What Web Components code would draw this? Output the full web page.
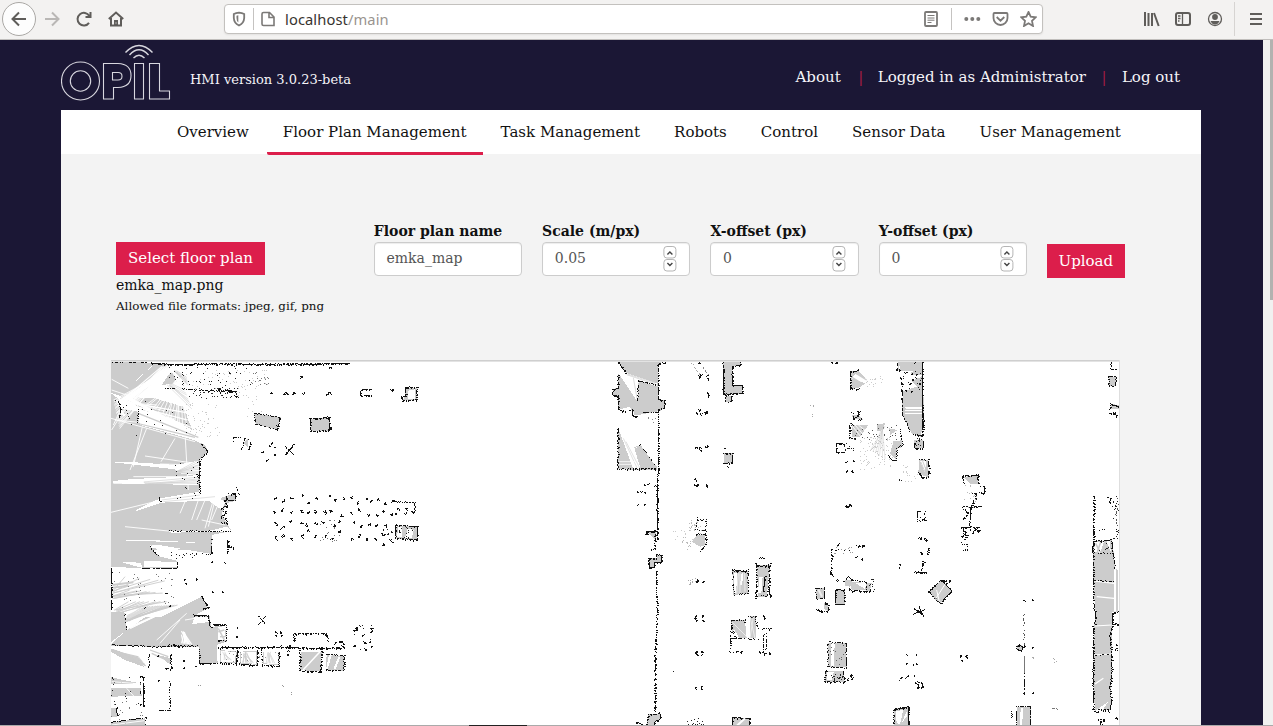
<!DOCTYPE html>
<html lang="en"><head><meta charset="utf-8"><title>OPIL HMI</title>
<style>
html,body{margin:0;height:100%;overflow:hidden;background:#1b1735;font-family:"DejaVu Serif",serif}
</style></head><body>
<hmi-window></hmi-window>
<script>
function define(name, html, setup){
  const t=document.createElement('template');t.innerHTML=html;
  customElements.define(name,class extends HTMLElement{
    constructor(){super();this.attachShadow({mode:'open'}).append(t.content.cloneNode(true));}
    connectedCallback(){if(setup&&!this.ready){this.ready=true;setup(this,this.shadowRoot);}}
  });
}

define('browser-bar',`<style>
:host{display:flex;box-sizing:border-box;height:40px;background:#f3f2f1;border-bottom:1px solid #c0bebc;align-items:center;padding:0 0 1px 2px;font-family:"Noto Sans","Open Sans",sans-serif}
svg{display:block;flex:none;fill:none;stroke:#5f5d5a;stroke-width:2}
.back{width:32px;height:32px;border:1px solid #aaa8a5;border-radius:50%;background:#fdfdfd;display:grid;place-items:center}
.fwd{margin-left:8px}.re{margin-left:16px}.home{margin-left:16px}
.url{box-sizing:border-box;display:flex;align-items:center;width:819px;height:30px;margin-left:100px;border:1px solid #c3c1be;border-radius:4px;background:#fff;box-shadow:0 1px 2px #0001;padding-left:6px}
.url svg{stroke:#7b7977;stroke-width:1.8}
.sep{width:1px;height:22px;background:#c5c3c1}
.addr{font-size:14.7px;line-height:20px;color:#99948f;margin-left:9px;flex:1;letter-spacing:.1px}.addr b{font-weight:400;color:#37342f}
</style>
<div class="back"><svg width="16" height="16"><path d="M15 8H2M8 1.5 1.5 8 8 14.5"/></svg></div>
<svg class="fwd" width="16" height="16" style="stroke:#b9b7b5"><path d="M1 8H14M8 1.5 14.5 8 8 14.5"/></svg>
<svg class="re" width="16" height="16"><path d="M13.3 5A6.3 6.3 0 1 0 13 11.8M14.5 1V6H9.5" /></svg>
<svg class="home" width="16" height="16"><path d="M.8 8 8 1.5 15.2 8M3 7V14.5H13V7"/><path d="M8 14.5V9" stroke-width="4"/><path d="M8 11.5v1" stroke="#fff" stroke-width="1"/></svg>
<div class="url"><svg width="16" height="16"><path d="M8 1.7Q11 2 13.200 3V7Q13 12 8 14.5Q3 12 2.800 7V3Q5 2 8 1.700Z"/><path d="M7.300 4.300V11.500Q5.500 10 5.500 7V4.700Z" stroke="none" fill="#7b7977"/></svg>
<span class="sep" style="margin:0 6px"></span><svg width="16" height="16"><path d="M3.500 1.500H9.500L14 6V14.500H3.500Q2 14.500 2 13V3Q2 1.500 3.500 1.500ZM9 1.500V6.500H14" stroke-width="1.600"/></svg>
<span class="addr"><b>localhost</b>/main</span>
<svg width="16" height="16"><rect x="2" y="1" width="12" height="14" rx="1"/><path d="M4.5 4.5H11.5M4.5 7H11.5M4.5 9.2H11.5M4.5 11.5H8.5" stroke-width="1"/></svg>
<span class="sep" style="margin:0 12px"></span>
<svg width="17" height="16"><g fill="#7b7977" stroke="none"><circle cx="2.3" cy="8" r="2"/><circle cx="8.3" cy="8" r="2"/><circle cx="14.3" cy="8" r="2"/></g></svg>
<svg style="margin-left:11px" width="17" height="16"><path d="M2.500 2H14.500Q15.500 2 15.500 3V7A7 7 0 0 1 1.500 7V3Q1.500 2 2.500 2ZM4.700 6 8.500 9.700 12.300 6"/></svg>
<svg style="margin:0 5px 0 11px" width="17" height="16"><path d="M8.500 1 10.700 5.700 15.700 6.300 12 9.800 13 15 8.500 12.300 4 15 5 9.800 1.300 6.300 6.300 5.700Z"/></svg></div>
<svg style="margin-left:100px" width="17" height="16"><path d="M2 1V15M5.500 2V15M9 2V15M11 2 15.700 15"/></svg>
<svg style="margin-left:14px" width="18" height="16"><rect x="2" y="2" width="14" height="12" rx="2"/><path d="M8.500 2V14M4 5H6.500M4 7.500H6.500M4 10H5.500" stroke-width="1.300"/></svg>
<svg style="margin-left:15px" width="17" height="16"><circle cx="8" cy="8" r="6.500" stroke-width="1.300"/><circle cx="8" cy="6" r="2.900" fill="#5f5d5a" stroke="none"/><path d="M3.500 10H12.500Q11 13.500 8 13.500T3.500 10Z" fill="#5f5d5a" stroke="none"/></svg>
<span class="sep" style="height:34px;margin-left:10px;background:#d6d4d2"></span>
<svg style="margin-left:15px" width="12" height="16"><path d="M0 3H12M0 8H12M0 13H12"/></svg>`);

define('opil-logo',`<style>:host{display:block;width:110px;height:56px}svg{display:block;fill:none;stroke:#d8d7df;stroke-width:1.100}</style>
<svg width="110" height="58" viewBox="61 44 110 58"><circle cx="80.500" cy="81" r="19"/><circle cx="80.500" cy="81" r="10.200"/>
<path d="M103.500 63.500H118Q131 64 131 75.500T118 87.500H113.500V99H103.500ZM112.500 72.500V80H118Q122 80 122 76.200T118 72.500ZM134.500 63.500H143.500V99H134.500ZM149.500 63.500H159.500V91H169.500V99H149.500Z"/>
<path d="M125.500 52.500Q139 38.500 152.500 52.500M129.500 55Q139 44.500 148.500 55M133.500 58Q139 52.500 144.500 58" stroke-width="1.400"/></svg>`);

define('site-header',`<style>
:host{display:flex;height:70px;box-sizing:border-box;color:#f5f4f8;padding-top:4px;width:1140px;margin-left:61px}
.v{font-size:13px;line-height:20px;margin:26px 0 0 19px;flex:1}
nav{display:flex;font-size:15px;line-height:20px;margin:23px 21px 0 0}
i{font-style:normal;color:#a51d45;width:37.200px;text-align:center;text-indent:3px}i+span+i{text-indent:0;width:36px}
</style><opil-logo></opil-logo><span class="v">HMI version 3.0.23-beta</span>
<nav><span>About</span><i>|</i><span>Logged in as Administrator</span><i>|</i><span>Log out</span></nav>`);

define('nav-tab',`<style>:host{display:block;box-sizing:border-box;height:45px;padding:1px 16px 0;font-size:15px;line-height:43px;color:#111;white-space:nowrap}
:host([active]){border-bottom:3px solid #dc1e4b;border-radius:2px 0 0 2px}</style><slot></slot>`);
define('nav-tabs',`<style>:host{display:flex;gap:2.050px;height:44px;background:#fff;padding-left:100px}</style><slot></slot>`);

define('action-button',`<style>:host{display:block;box-sizing:border-box;background:#dc1e4b;color:#fff;font-size:15px;line-height:33px;padding:0 12px;white-space:nowrap;width:max-content}</style><slot></slot>`);

define('form-field',`<style>:host{display:block;width:148.300px}
label{display:block;font-weight:700;font-size:14px;line-height:20px;color:#111;height:21px;white-space:nowrap}
.in{box-sizing:border-box;display:flex;justify-content:space-between;height:34px;border:1px solid #ccc;border-radius:4px;background:#fff;box-shadow:inset 0 1px 1px #00000013;padding:0 12px 0 11.700px;color:#555;font-size:14px;line-height:31px}
svg{display:none;margin-top:3px;fill:none;stroke:#b5b5b5}:host([number]) svg{display:block}
</style><label></label><div class="in"><slot></slot><svg width="14" height="26"><rect x=".9" y=".5" width="12" height="11.500" rx="3"/><rect x=".9" y="13.500" width="12" height="11.500" rx="3"/><path d="M4.400 8.500 6.900 6 9.400 8.500M4.400 17 6.900 19.500 9.400 17" stroke="#444" stroke-width="1.400"/></svg></div>`,
(h,r)=>r.querySelector('label').textContent=h.getAttribute('label'));

define('floor-form',`<style>
:host{display:flex;height:206px;box-sizing:border-box;padding:67px 0 0 55px}
.file{width:257.800px;padding-top:21px;color:#111}.file action-button{line-height:33px}
.name{font-size:14px;line-height:20px}.hint{font-size:11.900px;line-height:20px;margin-top:1px}
.fields{display:flex;gap:20px}.up{padding:23px 0 0 20px}.up action-button{line-height:34px;padding:0 11.500px}
</style>
<div class="file"><action-button>Select floor plan</action-button><div class="name">emka_map.png</div><div class="hint">Allowed file formats: jpeg, gif, png</div></div>
<div class="fields"><form-field label="Floor plan name">emka_map</form-field><form-field label="Scale (m/px)" number>0.05</form-field><form-field label="X-offset (px)" number>0</form-field><form-field label="Y-offset (px)" number>0</form-field></div>
<div class="up"><action-button>Upload</action-button></div>`);

define('floor-map',`<style>:host{display:block;margin-left:50px;width:1009px;height:366px;background:#fff}svg{display:block}</style>
<svg width="1009" height="366" viewBox="111 360 1009 366" shape-rendering="crispEdges"></svg>`,(h,r)=>{
 let seed=71,ox=0,oy=0,out='';
 const rnd=()=>(seed=(seed*16807)%2147483647)/2147483647;
 const pts=s=>s.trim().split(/\s+/).map(p=>{const[a,b]=p.split(',').map(Number);return[ox+a/3,oy+b/3]});
 const put=(d,c)=>out+='<path fill="'+c+'" d="'+d+'"/>';
 const px=(x,y,w=1,t=1)=>'M'+Math.floor(x)+' '+Math.floor(y)+'h'+w+'v'+t+'h-'+w+'z';
 const poly=(s,c)=>put('M'+pts(s).map(p=>p.join(' ')).join('L')+'Z',c);
 const at=(x,y)=>{ox=x;oy=y};
 const G=(...a)=>a.forEach(s=>poly(s,'#cccccc'));
 const W=(...a)=>a.forEach(s=>poly(s,'#fff'));
 // broken wall following a polyline; dense walls thicken here and there
 const L=(s,den=.82,j=.9,c='#111')=>{const p=pts(s);j*=.7;let d='';for(let i=1;i<p.length;i++){const[x1,y1]=p[i-1],[x2,y2]=p[i],n=Math.max(1,Math.hypot(x2-x1,y2-y1)),v=Math.abs(y2-y1)>Math.abs(x2-x1);
  for(let k=0;k<n;k++)if(rnd()<den){const t=den>.8&&j>.4&&rnd()<.3?2:1;d+=px(x1+(x2-x1)*k/n+(rnd()-.5)*j,y1+(y2-y1)*k/n+(rnd()-.5)*j,v?t:1,v?1:t)}}put(d,c)};
 const R=(s,c='#fff',w=.9)=>{const p=pts(s);for(let i=0;i+1<p.length;i+=2)out+='<path fill="none" shape-rendering="auto" stroke="'+c+'" stroke-width="'+w+'" d="M'+p[i].join(' ')+'L'+p[i+1].join(' ')+'"/>'};
 const fan=(x,y,x1,y1,x2,y2,n,c,w,q=12)=>{for(let i=0;i<n;i++){const t=(i+rnd()*.7)/n;R((x+rnd()*q)+','+(y+rnd()*q)+' '+(x1+(x2-x1)*t)+','+(y1+(y2-y1)*t),c,w)}};
 const S=(x,y,w,t,n,c='#222')=>{let d='';while(n-->0)d+=px(ox+(x+rnd()*w)/3,oy+(y+rnd()*t)/3);put(d,c)};
 // compact mark: a short random walk of pixels round each point
 const B=(s,n=5,r=2)=>{let d='';pts(s).forEach(([x,y])=>{let a=x,b=y;for(let k=0;k<n+1;k++){d+=px(a,b);a+=Math.round((rnd()-.5)*2.600);b+=Math.round((rnd()-.5)*2.600);if(Math.abs(a-x)>r)a=x;if(Math.abs(b-y)>r)b=y}});put(d,'#111')};
 const box=(s,den=.8)=>{G(s);L(s+' '+s.trim().split(/\s+/)[0],den)};

 // north-west hall
 at(105,350);
 G('18,32 150,40 105,80 50,140 18,128','170,105 200,60 225,85 215,100','18,130 45,150 45,190 18,215',
   '18,150 50,195 130,225 270,272 298,283 310,305 285,330 283,430 330,450 390,430 392,452 365,460 350,490 365,520 380,543 320,555 320,600 18,600');
 W('45,140 150,140 240,170 285,280 270,270 105,225 100,185 45,165','25,337 60,335 215,345 280,332 283,380 215,368 210,358','25,393 85,387 280,378 280,405 130,402 25,400','165,445 285,425 350,437 345,450 170,458 95,483 92,480','190,543 310,543 365,530 380,545 200,548','320,570 368,570 368,600 320,600','18,570 130,577 320,592 320,600 160,596 18,575','330,440 300,450 315,455 350,480 362,455');
 G('148,42 205,42 190,60 70,165 45,150 50,135','60,140 150,145 235,170 262,240 200,205 110,180','48,175 98,185 102,222 70,212');
 fan(165,42,45,150,75,165,15,'#fff',1.100,30);fan(180,42,25,150,45,240,18,'#fff',.8,20);fan(205,50,70,140,35,170,14);fan(62,138,150,190,265,245,18,'#fff',1.100,8);fan(215,70,120,160,250,240,14,'#fff',.9,20);fan(30,150,150,160,285,265,10);fan(190,40,235,120,300,250,10);
 R('45,152 255,190 50,158 265,215 100,172 280,240','#fff',1.200);
 G('290,284 308,305 285,328 252,325 250,300');
 R('20,88 70,115 18,205 270,275 30,210 130,220 125,235 75,360 112,230 85,350 210,265 168,335 240,250 250,420 120,318 270,340 165,342 280,345 85,380 280,380 25,400 200,400 18,487 170,450 240,455 225,490 280,450 260,510 300,450 275,510 330,450 310,530 325,450 300,535 345,450 320,510 290,510 360,525 190,543 60,530 20,120 95,145 110,210 280,272 70,160 20,240 55,160 25,225');
 R('105,222 270,262 100,190 280,262','#ccc',1.200);
 fan(210,360,280,330,283,378,9,'#ccc',.6);fan(110,395,280,380,280,402,5,'#ccc',.6);R('170,450 285,435 175,455 330,440','#ccc',.6);
 fan(185,98,240,120,262,180,8,'#ccc',.5);fan(205,60,245,80,250,110,6,'#ccc',.7);
 L('22,36 130,37',.6);L('140,40 220,44 330,41 450,43 590,42 735,40',.97,1.200);L('145,43 240,45 400,42 520,45 730,42',.55,2);
 S(190,45,250,60,50);S(220,60,280,60,55,'#ccc');S(250,115,150,30,35,'#333');L('180,115 245,118 310,122 395,124',.75,1.300);S(350,105,50,45,18);S(240,160,110,100,50,'#ccc');
 S(440,60,55,45,18,'#777');S(400,100,70,100,18,'#ccc');B('500,128 540,127 546,131 592,130 565,134 592,80 672,127 670,132 678,52 863,117 350,125 372,128 380,120 395,140 345,118',6);
 L('770,142 765,125 775,118 800,118',.95);L('778,135 800,138',1);
 G('905,115 935,115 935,150 895,150');W('908,122 930,118 930,146 908,148');L('902,112 936,112 936,150 892,152 890,140 903,140 902,112',.95,1.200);
 box('448,190 527,202 518,240 452,222',.75);box('615,206 673,203 675,242 618,244',.85);B('522,208 517,230 667,205 672,236',6);
 L('385,275 388,262 410,262',.6);L('410,298 420,265 430,268',.8);L('432,298 436,275',.9);G('415,280 428,268 428,292');
 L('540,290 565,313',1);L('565,285 542,313',1);B('475,303 492,290 507,293 502,280 511,312 490,328',3);
 L('40,150 48,182 42,205',.9);L('100,180 98,220',.7);L('290,282 309,305 286,328',.88);L('283,330 285,430',.98,.8);L('280,378 278,402',.6);S(25,150,230,110,24);S(210,330,70,120,20);L('165,443 165,458',.9);
 L('395,412 402,435',.8);L('365,440 365,452 391,452 391,432 370,432',.9);L('358,455 368,468 350,475 362,490 350,500 367,510 365,522 350,515',1,2.200);L('190,543 378,544',.75);L('320,570 320,600',.95);L('368,570 368,600',1);S(320,570,65,30,14);L('70,570 70,590',.6);
 B('515,442 532,455 560,446 592,440 610,458 635,442 672,440 690,455 715,449 743,444 760,459 785,446 795,456 817,452 838,463 862,450 511,487 532,480 558,490 590,482 608,486 632,488 662,486 678,480 708,494 742,492 762,482 787,494 815,496 835,487 862,490 511,521 532,531 557,515 588,519 605,523 630,518 655,520 685,528 704,517 748,520 767,531 790,522 817,526 838,527 511,564 532,557 557,566 588,558 608,545 630,562 662,560 681,566 704,548 739,564 762,558 788,568 815,572 833,556 858,574 838,585',7,2.100);
 L('862,455 930,458 930,490',.7);B('875,490 902,492 925,490 878,475 902,475',5);
 G('875,528 936,530 936,570 872,565');W('880,532 892,532 890,560 876,560','908,535 926,540 920,565 900,565');L('872,526 938,530 938,570 872,565 872,526',1,1.300);S(880,530,50,35,16);S(835,520,40,35,13);S(645,510,60,65,20,'#777');

 // south-west hall
 at(105,540);
 G('18,0 320,0 322,42 155,14 135,18 145,32 165,50 216,62 216,85 110,85 18,80','18,215 58,215 66,270 18,306','18,312 66,270 120,232 165,232 290,170 310,205 270,226 314,228 318,262 360,253 365,305 335,315 338,370 283,370 283,322 18,318');
 W('18,0 140,0 315,10 200,6','48,66 108,68 112,84','118,64 216,65 216,82 118,82','135,16 320,44 280,54 160,30','322,0 365,0 365,35 322,35','338,262 360,258 362,300 340,302','268,232 312,230 314,246 262,252');
 fan(18,150,60,110,200,125,5,'#ccc');fan(18,165,70,150,180,160,7,'#ccc');fan(22,210,70,185,190,185,8,'#ccc');fan(62,235,120,200,220,195,14,'#ccc');fan(60,225,110,200,170,200,10,'#ddd');
 R('22,135 85,127 22,143 70,137','#ccc',2);fan(70,255,150,230,210,200,6);R('165,310 225,240 155,300 245,220 240,240 300,230');fan(228,272,228,310,262,314,8,undefined,1.200);R('340,275 358,270 345,290 360,290 340,265 358,300','#ccc',1.500);
 L('20,85 20,212',.85);L('110,85 216,85 218,63',.7);L('320,10 320,42 300,45',.85);L('135,20 165,52',.7);S(190,35,110,20,16);L('368,0 368,45',1);L('366,20 388,24',1);
 L('290,170 310,203 295,205',1);L('265,225 310,228 315,258 320,265',.95);L('325,253 365,255 364,305 340,300',.9);L('58,215 66,270',.5);S(20,95,200,110,36,'#777');B('237,117 273,118 245,133 322,157 354,158 183,160 194,200 122,202 358,68 323,67 398,261 398,289',3,1);
 L('22,315 160,320 280,318',.75,1.800);L('190,317 210,315 235,320',1,2);L('340,323 470,322 560,323 650,325 720,324',.95,1.500);L('350,322 460,325 540,320 640,328',.4,3);
 G('345,330 395,335 394,370 345,367','405,335 457,332 456,374 405,372','475,335 522,335 520,376 475,372');W('348,333 392,336 391,367 348,365','408,337 454,336 453,371 408,369','478,337 519,337 518,373 478,370');
 fan(350,335,355,360,385,360,5,'#ccc',.6);fan(415,335,410,368,448,368,9,'#ccc',.8);fan(485,335,480,370,512,370,6,'#ccc',.6);
 L('283,330 283,370 338,370',.85);L('345,368 395,373 397,330',.9);L('403,372 457,377 458,330',.95);L('472,375 522,380 522,335',.95);L('470,330 472,375',.6);S(345,328,175,40,24,'#999');
 G('587,335 650,335 648,395 585,390','665,345 718,348 716,392 662,390');R('594,390 645,335','#fff',1.500);W('672,345 680,345 668,388 663,388','700,350 706,350 692,388 685,388');L('585,330 585,392 648,396 650,330',.96,1.300);L('662,342 715,347',.5);L('717,345 717,392 662,390',.92);L('567,305 567,282 665,280 670,305',.85);B('690,310 705,305 714,310 700,322 715,320',7);
 L('460,228 483,255',.8);L('483,228 460,255',.8);B('514,276 528,276 514,289 528,289 550,332 550,347 555,318 568,300 660,285',4,1);B('748,275 757,268 752,272 796,265 803,273 777,282 778,309 752,316 797,308 803,320 780,328',5);S(742,255,70,75,10);
 G('18,325 45,335 100,365 120,382 60,360 18,335','160,345 198,355 196,375','18,412 105,430 18,432','18,443 108,445 110,468 18,470','18,505 36,505 36,530 18,530','18,547 120,535 120,556 18,556');
 fan(18,325,100,350,125,380,9,'#ccc',1.200);R('135,330 190,350 140,340 195,365','#ccc',1.200);L('132,340 132,385',.7);L('198,343 198,388 182,385',.9);L('105,410 116,412 116,502',.95);L('105,425 108,465',.6);L('195,420 195,511 160,511',.8,.8);L('36,503 36,530',1);L('20,547 123,532 123,556',.7);B('237,360 237,383 273,379 163,422 160,345 105,497 187,385',3,1);S(20,410,90,85,16);S(20,480,95,70,16,'#777');R('65,445 90,472 20,425 110,432 20,555 118,542');
 S(280,435,8,8,2,'#999');S(530,430,8,15,2,'#999');S(558,458,4,6,2,'#999');

 // central wall
 at(600,350);
 G('55,33 195,38 175,42 175,148 195,150 195,173 175,187 105,198 97,178 80,187 55,177 55,137 38,137 38,117 55,113 55,73 80,70','55,235 170,350 170,360 55,358');
 W('57,72 82,70 172,100 172,110 116,90 112,155','60,178 90,170 98,195 62,187','103,197 174,184 174,197','55,235 170,235 170,350 122,285 168,350 150,356 115,295 102,290 122,358 100,358');
 G('108,290 122,285 168,350 150,356');
 R('83,72 165,98 80,74 170,104 100,83 112,150','#ccc',.7);R('70,265 112,356 78,275 120,356','#ccc',.6);R('55,335 105,335 55,343 105,343','#fff',.8);
 L('53,35 80,72',1);L('55,75 55,115 38,118 38,136 55,137 56,178 78,187',1,1.300);L('88,182 97,178 97,198 112,200',.9);L('113,155 115,93 170,105',.78);L('173,187 128,187',.65);L('198,37 175,42 175,148 194,152 194,172 175,180 175,355 172,440 173,540',.98,1.100);L('54,235 54,357 170,357',.88,1.300);L('105,290 122,285 168,350',.3);
 S(130,200,40,25,5,'#888');B('113,427 135,430 135,406 145,404 165,406 113,465 132,465 123,427',3,1);L('170,420 172,500',.6,2);
 L('275,38 300,75',.6,1,'#aaa');L('300,40 327,77',.5,1,'#888');B('300,40 300,72 302,82 297,80 325,84 324,75 290,187 299,183 300,190 320,186 320,191 291,294 298,291 298,299 319,293 321,291 290,390 293,402 287,405 318,402 318,408 283,403',5,2);L('323,128 325,145',1);
 G('370,33 423,33 423,48 397,50 397,106 427,106 427,130 368,135','380,137 395,137 395,156 378,156','373,310 398,310 398,338 373,338');W('398,51 430,51 430,105 398,105');L('370,35 370,133 427,130 427,106 397,106 397,50 423,45 422,35',.96,1.200);L('378,137 378,156 395,155 395,137',.85);L('372,310 398,310 398,339 370,340',.95);B('373,295 384,351 694,38 712,38',2);S(632,160,10,50,6,'#aaa');
 L('292,502 292,510 318,510 318,543 288,540 290,512',.75,1.500);S(220,540,60,30,10,'#ccc');S(265,510,40,45,24,'#bbb');G('142,547 168,547 168,570');L('137,555 142,545 173,545 173,570',.95);

 at(600,530);
 L('140,5 145,15',1);L('165,0 165,55 155,60',.9,1.800);box('147,85 170,85 170,75 185,75 185,97 163,97 163,112 147,112',.96);L('168,120 172,240 168,330 166,450 167,545',.86,.8);L('165,350 163,545',.35);
 G('275,35 290,15 315,12 317,45 300,50');L('290,12 318,12 318,45 300,65',.9);S(245,20,30,40,14,'#bbb');
 B('290,157 296,150 309,154 285,264 291,270 288,260 308,260 309,270 287,370 292,375 288,366 307,368 306,374 285,475 290,478 307,468 307,478',5,1.600);S(265,145,28,20,12,'#aaa');S(220,425,3,3,1);
 G('397,122 445,122 445,190 400,195');W('402,130 412,130 408,190 402,188','425,130 430,130 426,165 420,165');L('397,120 445,120 445,190 402,195 397,122',.72,1.600);L('400,122 440,125',1);R('415,130 410,190 420,130 420,190 434,130 435,185','#eee');
 G('470,105 510,105 500,200 475,200');W('478,140 488,140 484,190 474,190');L('465,100 475,107 505,108 515,100',1,1.800);L('470,105 468,205',.9,1.600);L('495,140 490,185',1);L('508,108 507,185 512,205',.85);L('465,200 485,195 500,200 505,180',.8);L('478,84 494,84',.8);
 G('393,270 435,270 440,325 400,325','450,258 468,258 468,325 450,325');W('398,300 404,300 418,325 400,325');L('393,272 435,270 435,280',.8);L('395,270 390,370 400,368',.85);L('400,325 475,328',.7);L('445,260 467,260 475,300 512,295 490,320 490,360',.7,2);L('500,320 500,355 485,370',.8);B('410,367 425,368 480,370 492,370 508,371 490,257 492,267 400,310 405,320',4);R('395,275 440,320 450,260 465,325 460,260 450,325','#eee');
 box('145,553 172,553 180,545 182,567 165,575 163,588 140,588',.85);L('107,580 115,577 130,588',1,1.600);S(260,565,50,22,17);box('398,562 450,567 448,590 398,590',.95);R('410,588 435,565','#fff',2);

 // north-east stations
 at(820,350);
 B('33,38 50,39',3);G('94,65 115,62 145,95 118,112 94,117');W('94,85 108,72 145,92 135,100');R('96,82 125,100 108,70 140,90','#ccc',1.400);L('118,55 110,65 92,65 91,115 118,117',.85);S(140,75,50,40,16,'#ccc');
 G('233,33 308,33 312,205 302,260 275,250 247,195 248,125 290,110 275,95 300,80 235,60');W('237,40 242,65 290,62 305,77 300,83 275,88 240,90','255,172 308,172 308,176 260,176','255,181 308,181 308,184 260,184','255,190 308,190 308,193 260,193');
 G('250,34 275,34 270,46 248,44','272,65 300,63 303,74 275,76');L('308,35 308,240',.95);L('232,35 232,55',.8);L('247,125 248,195 265,230 270,245',.7);L('308,195 312,210 308,258 280,253',.88);B('285,38 237,60 229,58 255,70 278,70 290,72 242,85 245,100 270,100 280,92 298,100 245,125 260,124 275,125 245,148',4,1.500);S(240,65,65,55,22);
 G('95,225 145,225 120,260 95,260','170,222 195,220 190,240 170,245','208,235 232,240 210,255','220,275 247,270 247,290 230,298 228,330 210,310','95,195 115,195 130,210 100,205');R('105,225 135,260 115,225 140,245 97,228 122,260');L('98,190 105,205 118,190',.85,2);L('90,225 90,265 110,265',.85);B('100,225 115,190 100,203 118,208',5);S(90,220,150,50,36,'#555');S(120,260,100,100,80,'#ccc');S(155,260,50,70,28,'#ccc');fan(185,225,150,300,200,330,7,'#ccc',.5);L('205,315 215,330 230,332 232,295 248,285 240,240',.75,1.800);
 L('50,280 50,308 75,308',.95);L('53,280 75,282',.9);S(72,278,32,30,13);B('80,338 100,335 82,363 97,365 80,468 88,465 93,467 82,471',5,1.500);G('283,270 310,270 310,295 283,295');L('283,280 285,295 310,295 312,270',.9);S(285,255,20,35,16);
 G('298,330 325,330 326,382 305,375 295,365');W('300,333 318,333 315,370');R('302,335 320,378 308,333 322,370','#ccc',.9);L('297,328 325,330',.7);L('325,330 327,382 305,382 295,365',.88,1.200);S(245,345,50,50,17,'#ccc');S(235,388,15,4,4);
 L('302,485 292,485 292,513 303,513',.7);L('315,485 315,513 300,502',.9);B('302,568 320,568',4);
 G('430,380 475,378 475,402 450,402');L('432,400 427,378 475,375 475,400',1,1.900);L('480,410 494,410 492,430 480,428',.9);L('458,430 468,430 468,445 455,465 470,470',1,1.600);L('430,470 455,472 485,470',.8);L('452,472 450,530',.9);L('430,475 445,490 430,510',.9,2);L('425,532 482,532',.9);L('430,540 440,555 432,570',1,2);S(430,405,40,70,15,'#bbb');B('460,543 472,541',4);
 L('873,35 872,58 895,58',.7);box('867,80 889,80 887,108 867,108',.8);G('872,162 896,165 896,178 872,178');L('870,180 872,162 895,170',.85);B('875,193 885,187 892,197',6);L('821,438 823,480 820,520 822,570',.97,1.200);L('862,442 870,445 870,463',1);S(875,440,20,130,15);L('893,445 895,465 888,490 892,530',.55,1,'#555');

 // south-east stations and racks
 at(800,530);
 L('95,58 96,85 92,130 100,140',.82,1.300);S(98,50,65,20,12,'#999');L('105,60 150,62',.25);B('175,48 187,50 193,45 165,83 187,85 115,46 95,132 108,151',3);L('168,45 195,50',.6);
 G('135,150 160,148 150,170 135,168','150,155 215,160 210,182 155,180');W('165,158 200,158 195,177');L('132,155 145,140 155,150',.9);L('150,175 150,183 220,184',.9,1.500);L('155,150 200,157 200,180',.8);S(205,145,18,35,12);
 box('47,175 73,173 73,205 50,207',.7);R('55,178 66,200','#eee',2);box('106,180 134,180 134,224 106,224',.92);G('72,220 84,220 84,245 72,235');L('48,236 55,242 85,245 85,225 75,215',.85,1.500);
 B('363,27 380,29 363,66',6);L('385,55 383,73',1);L('348,98 365,94 378,100',.7);L('368,100 365,123',.9);L('343,126 380,127',1,.7);B('298,104 298,113',2,1);L('490,0 493,15 485,20',1);L('486,40 504,45 502,60 487,60',.8,1.800);B('510,2 523,0 535,3',4);
 box('385,185 425,150 455,183 420,222',.85);R('405,210 440,155 410,180 418,215','#fff',1);B('427,155 438,155 447,155 440,163',5);L('342,235 373,255',1);L('375,240 340,252',1);L('358,230 365,255',.8);
 G('84,338 138,338 140,412 84,410','76,422 132,422 132,455 74,455');W('92,340 104,340 102,408 92,408','80,425 102,425 95,450 80,450');L('84,335 138,340 140,415 84,410 84,335',.76,1.500);L('78,420 74,455 132,458 132,422',.85,1.600);S(90,340,45,65,14,'#666');S(95,430,35,25,22);B('150,435 146,444 153,448',6);
 B('320,372 348,372 320,403 340,404 348,402 303,443 325,438 342,437',2,1);S(296,435,25,18,5);L('347,458 355,465 353,472 368,472 366,458 348,456',.9);B('482,380 498,378 488,392 503,385',4,1);
 box('282,537 326,530 325,588 282,588',.9);W('288,543 310,540 300,582 290,580','303,582 320,545 320,560');L('280,540 325,532 325,585',1);
 G('650,345 665,345 670,355 663,362 652,358','650,530 692,530 692,588 650,588');W('662,535 670,535 666,588 660,588');L('650,350 657,345 668,350 665,361 655,362 650,354',1);B('672,210 697,210 697,351 672,350 672,490 697,490',3,1);L('672,235 672,345',.45,.3,'#555');L('673,380 673,430',1,.2,'#777');L('673,430 673,490',.75,.2);L('650,530 692,530 692,588',.8);L('650,540 650,588',.8);L('635,545 637,588',.4);S(698,375,6,15,4,'#aaa');S(755,380,23,20,4,'#aaa');S(755,530,23,12,5,'#777');
 G('880,35 935,30 942,70 945,115 955,120 955,245 937,245 937,283 935,290 935,375 937,445 932,460 933,540 885,542 880,460 882,375 882,290 887,245 882,195 880,150 880,70');
 W('885,35 912,35 900,68 882,66','920,35 930,33 932,65','905,545 885,543 925,515');R('887,40 900,66 902,36 892,66','#ccc',1.500);R('882,153 942,160 890,200 942,205 885,288 935,285 882,375 935,372 885,462 910,445','#fff',1.200);R('945,118 945,245','#fff',2);
 L('882,0 880,35 878,68',.95);L('880,35 935,30 940,70 945,115',.7,1.500);L('880,70 938,70',.65,1.500);L('880,75 880,150 882,240 887,245 885,285',.85);L('880,152 942,155',.6,1.200);L('957,245 938,250 938,282 957,282',1,1);L('880,290 880,460 882,540',.92,1.200);L('937,290 930,315 935,370 935,445 930,465 935,515 930,540',.95,1.500);L('882,375 935,373',.55);L('880,540 892,548 898,540 925,540 933,548',.9,1.500);S(880,35,55,35,12);L('888,0 952,0',.2);S(948,0,9,30,8);L('897,568 915,570 900,575 902,588 910,580',.9);B('950,566 950,342 952,355',5);
 put('M111 360H1120v1H111z','#cfcfcf');put('M1119 360v366h1v-366z','#dedede');put('M111 361h1008v1H111z','#e3e3e3');
 r.querySelector('svg').innerHTML=out;
});

define('page-scrollbar',`<style>:host{display:flex;justify-content:flex-end;width:10px;background:#f1f1f0}div{width:3px;height:260px;background:#b3b2b0}</style><div></div>`);

define('hmi-window',`<style>
:host{display:flex;flex-direction:column;height:726px;width:1273px;position:relative;overflow:hidden}
.view{display:flex;height:686px}.page{width:1263px;background:#1b1735}
main{display:block;width:1140px;margin-left:61px;background:#f3f3f3;height:616px}
.edge{position:absolute;left:0;right:0;bottom:0;height:1px;background:linear-gradient(90deg,#aaa 469px,#222 469px 527px,#aaa 527px)}
</style><browser-bar></browser-bar><div class="view"><div class="page"><site-header></site-header><main>
<nav-tabs><nav-tab>Overview</nav-tab><nav-tab active>Floor Plan Management</nav-tab><nav-tab>Task Management</nav-tab><nav-tab>Robots</nav-tab><nav-tab>Control</nav-tab><nav-tab>Sensor Data</nav-tab><nav-tab>User Management</nav-tab></nav-tabs>
<floor-form></floor-form><floor-map></floor-map></main></div><page-scrollbar></page-scrollbar></div><div class="edge"></div>`);
</script></body></html>
